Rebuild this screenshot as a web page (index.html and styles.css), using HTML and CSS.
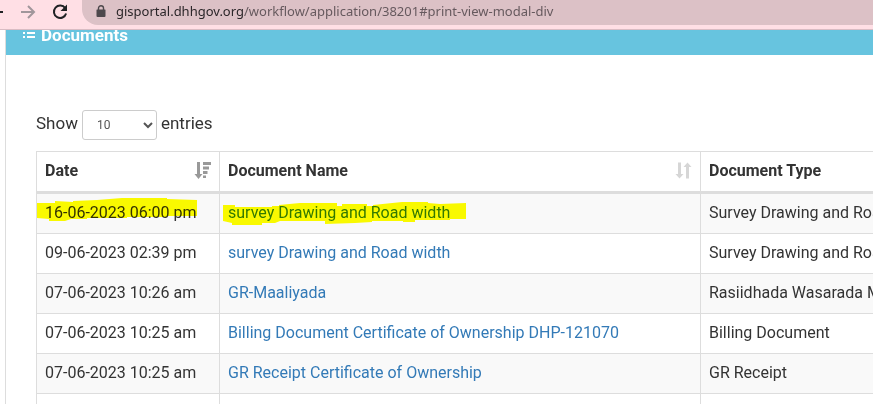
FILE: index.html
```
<!DOCTYPE html>
<html lang="en">
<head>
    <meta charset="UTF-8">
    <meta name="viewport" content="width=device-width, initial-scale=1.0">
    <title>Documents</title>
    <link rel="stylesheet" href="styles.css">
</head>
<body>

    <!-- Browser bar -->
    <div class="toolbar">
        <button class="nav-button back" type="button" aria-label="Back">
            <svg width="16" height="16" viewBox="0 0 16 16"><path d="M13 8H3M8 2.500L2.500 8L8 13.500" fill="none" stroke="#202124" stroke-width="2"/></svg>
        </button>
        <button class="nav-button forward" type="button" aria-label="Forward">
            <svg width="16" height="16" viewBox="0 0 16 16"><path d="M1 8H14M8 2L14 8L8 14" fill="none" stroke="#a1969b" stroke-width="2"/></svg>
        </button>
        <button class="nav-button reload" type="button" aria-label="Reload">
            <svg width="16" height="16" viewBox="0 0 16 16"><path d="M13.200 4.200A6.200 6.200 0 1 0 14.100 9.500" fill="none" stroke="#202124" stroke-width="2"/><path d="M15 0.500V7H8.500Z" fill="#202124"/></svg>
        </button>
        <div class="address">
            <svg class="lock" width="10" height="12" viewBox="0 0 10 12"><path d="M1 4.500H9Q9.500 4.500 9.500 5V11Q9.500 12 8.500 12H1.500Q0.500 12 0.500 11V5Q0.500 4.500 1 4.500Z" fill="#4d484c"/><path d="M2.500 5V3A2.500 2.200 0 0 1 7.500 3V5" fill="none" stroke="#4d484c" stroke-width="1.400"/></svg>
            <span class="url"><span class="host">gisportal.dhhgov.org</span>/workflow/application/38201#print-view-modal-div</span>
        </div>
    </div>

    <div class="viewport">
        <div class="panel">
            <div class="panel-header">
                <svg width="12" height="12" viewBox="0 0 12 12"><path d="M0 0H2V1H0ZM4 0H12V1H4ZM0 3H2V5H0ZM4 3H12V5H4ZM0 7H2V9H0ZM4 7H12V9H4Z" fill="#fff"/></svg>
                <h1>Documents</h1>
            </div>
            <div class="panel-body">
                <div class="length-control">
                    <label for="page-length">Show</label>
                    <select id="page-length">
                        <option>10</option>
                        <option>25</option>
                        <option>50</option>
                        <option>100</option>
                    </select>
                    <span>entries</span>
                </div>

                <table class="documents">
                    <colgroup>
                        <col class="col-date">
                        <col class="col-name">
                        <col>
                    </colgroup>
                    <thead>
                        <tr>
                            <th>
                                <div class="heading">Date
                                    <svg width="17" height="17" viewBox="0 0 17 17"><path d="M3 0H6V12H8.500L4.500 17L0.500 12H3ZM9 0H17V3H9ZM9 4.500H15V7.500H9ZM9 9H13.500V12H9ZM9 13.500H12V16H9Z" fill="#999"/></svg>
                                </div>
                            </th>
                            <th>
                                <div class="heading">Document Name
                                    <svg width="17" height="17" viewBox="0 0 17 17"><path d="M3 0.500H6V12H8.500L4.500 16.500L0.500 12H3ZM11 16.500H14V5H16.500L12.500 0.500L8.500 5H11Z" fill="#d6d6d6"/></svg>
                                </div>
                            </th>
                            <th>Document Type</th>
                        </tr>
                    </thead>
                    <tbody>
                        <tr>
                            <td class="marked">16-06-2023 06:00 pm
                                <svg class="marker" width="162" height="32" viewBox="0 0 162 32"><path d="M0 9H18V7L36 8V7L60 6L85 4H130V5L160 6V22H130V23H90V24H50V25H34L28 27H12V25L0 24Z" fill="#ff0"/></svg>
                            </td>
                            <td class="marked"><a href="#">survey Drawing and Road width</a>
                                <svg class="marker" width="248" height="32" viewBox="0 0 248 32"><path d="M3 11H15V13H52V12H59V11L80 9H117V12H122V10H147V12H153V11L182 8H208V9L220 10L246 9V25H230V26H195V28H183V27H152V28L135 29L105 30V27H60L55 29H42V31H12V29L3 27Z" fill="#ff0"/></svg>
                            </td>
                            <td>Survey Drawing and Road width</td>
                        </tr>
                        <tr>
                            <td>09-06-2023 02:39 pm</td>
                            <td><a href="#">survey Drawing and Road width</a></td>
                            <td>Survey Drawing and Road width</td>
                        </tr>
                        <tr>
                            <td>07-06-2023 10:26 am</td>
                            <td><a href="#">GR-Maaliyada</a></td>
                            <td>Rasiidhada Wasarada Maaliyada</td>
                        </tr>
                        <tr>
                            <td>07-06-2023 10:25 am</td>
                            <td><a href="#">Billing Document Certificate of Ownership DHP-121070</a></td>
                            <td>Billing Document</td>
                        </tr>
                        <tr>
                            <td>07-06-2023 10:25 am</td>
                            <td><a href="#">GR Receipt Certificate of Ownership</a></td>
                            <td>GR Receipt</td>
                        </tr>
                        <tr>
                            <td>&nbsp;</td>
                            <td></td>
                            <td></td>
                        </tr>
                    </tbody>
                </table>
            </div>
        </div>
    </div>

</body>
</html>
```

FILE: styles.css
```
* {
    box-sizing: border-box;
}
body {
    margin: 0;
    height: 100vh;
    display: flex;
    flex-direction: column;
    overflow: hidden;
    font-family: Roboto, Arial, sans-serif;
    font-size: 16px;
    line-height: 23px;
    color: #333;
    background-color: #fff;
}

/* Browser bar */
.toolbar {
    flex: none;
    display: flex;
    height: 30px;
    background-color: #ffdfe5;
    border-bottom: 1px solid #d9bcc3;
}
.nav-button {
    flex: none;
    display: flex;
    align-items: center;
    justify-content: center;
    width: 32px;
    height: 23px;
    padding: 0;
    border: none;
    background: none;
}
.back {
    width: 20px;
    margin-left: -12px;
}
.forward {
    margin-left: 4px;
}
.address {
    flex: 1;
    display: flex;
    align-items: center;
    height: 25px;
    margin-left: 6px;
    padding: 0 0 3px 14px;
    background-color: #dcc1c6;
    border-bottom-left-radius: 16px;
}
.url {
    margin-left: 10px;
    font-family: "Noto Sans", "Open Sans", sans-serif;
    font-size: 13px;
    color: #66595e;
    white-space: nowrap;
}
.host {
    color: #2b2629;
}

/* Page */
.viewport {
    flex: 1;
    min-height: 0;
    overflow: hidden;
}
.panel {
    margin: -15px 0 0 5px;
    border-left: 1px solid #ddd;
}
.panel-header {
    display: flex;
    align-items: center;
    gap: 6px;
    height: 40px;
    padding: 0 17px;
    background-color: #67c4df;
    color: #fff;
}
.panel-header h1 {
    margin: 0;
    font-size: 17px;
    font-weight: bold;
}
.panel-body {
    padding: 55px 0 0 30px;
}
.length-control {
    display: flex;
    align-items: flex-start;
    gap: 4px;
    margin-bottom: 11px;
    font-size: 17px;
    line-height: 27px;
}
.length-control select {
    width: 75px;
    height: 30px;
    padding: 0 0 0 10px;
    border: 1px solid #ccc;
    border-radius: 3px;
    background-color: #fff;
    color: #555;
    font-family: inherit;
    font-size: 12px;
}

/* Table */
.documents {
    width: 100%;
    table-layout: fixed;
    border-collapse: separate;
    border-spacing: 0;
    border-top: 1px solid #ddd;
    border-left: 1px solid #ddd;
}
.col-date {
    width: 183px;
}
.col-name {
    width: 481px;
}
.documents th,
.documents td {
    padding: 7px 8px 9px;
    border-right: 1px solid #ddd;
    border-bottom: 1px solid #ddd;
    text-align: left;
    white-space: nowrap;
}
.documents th {
    border-bottom-width: 3px;
    font-weight: bold;
}
.documents th:last-child,
.documents td:last-child {
    padding-right: 0;
    border-right: none;
    overflow: hidden;
}
.documents tbody tr:nth-child(odd) {
    background-color: #f9f9f9;
}
.documents tbody tr:last-child {
    background-color: #fff;
}
.documents a {
    color: #337ab7;
    text-decoration: none;
}
.documents a:hover {
    text-decoration: underline;
}
.heading {
    display: flex;
    align-items: center;
    justify-content: space-between;
}

/* Highlighter strokes over the first row */
.marked {
    position: relative;
}
.marker {
    position: absolute;
    top: 0;
    left: 0;
    mix-blend-mode: multiply;
    pointer-events: none;
}
```
